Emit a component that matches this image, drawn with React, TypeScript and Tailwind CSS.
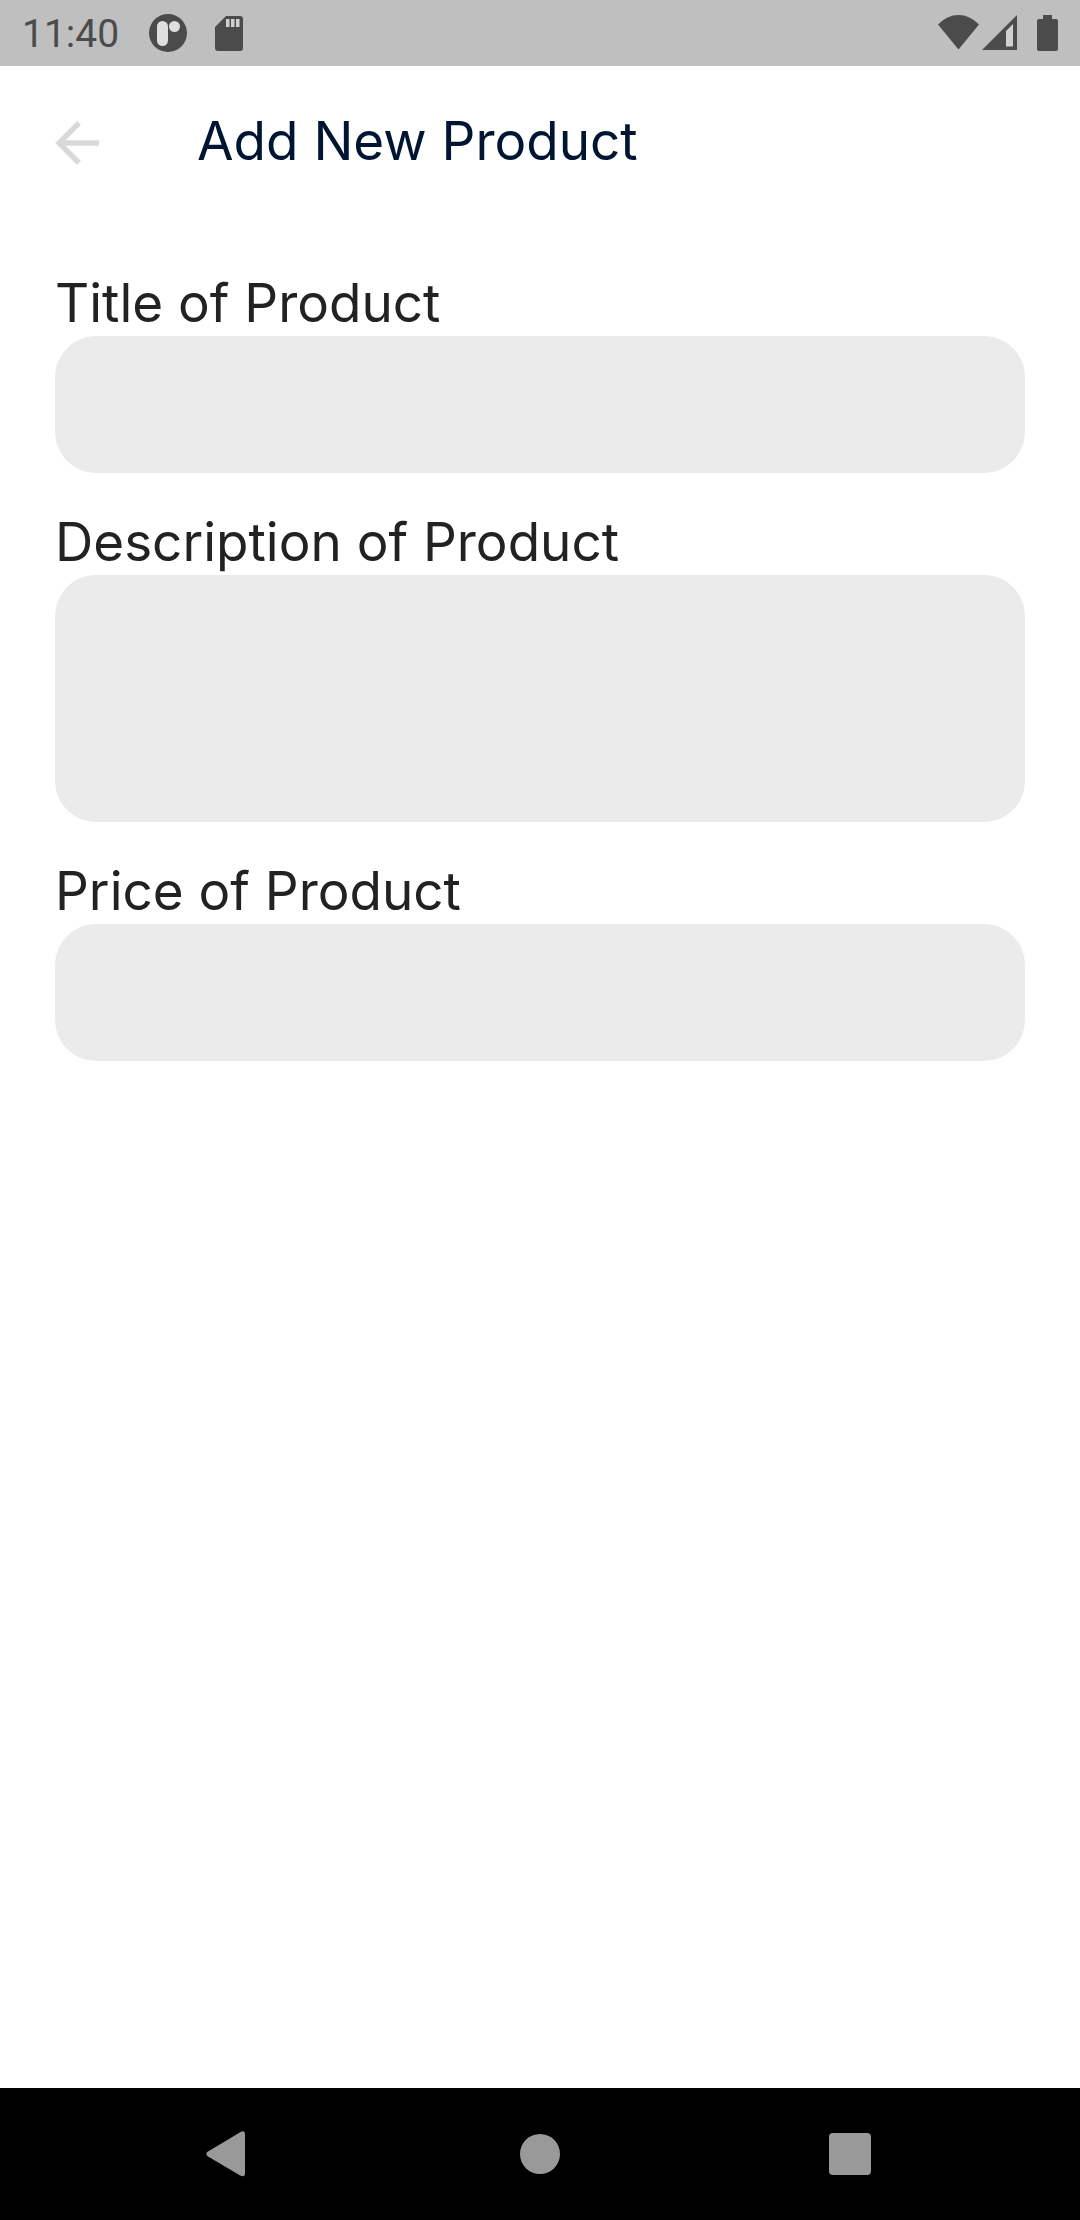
import React from "react";

function StatusBar() {
  return (
    <div className="flex h-[66px] shrink-0 items-center justify-between bg-[#bfbfbf] px-[22px] text-[#4b4b4b]">
      <div className="flex items-center">
        <time className="pt-0.5 font-['Roboto',sans-serif] text-[39px] leading-[46px]">11:40</time>
        <svg className="ml-[30px] h-[38px] w-[38px]" viewBox="0 0 38 38" aria-hidden="true">
          <circle cx="19" cy="19" r="19" fill="currentColor" />
          <rect x="8" y="7" width="11" height="25" rx="5.5" fill="#dedede" />
          <circle cx="25.5" cy="12.5" r="5.5" fill="#dedede" />
        </svg>
        <svg className="ml-7 h-[35px] w-7" viewBox="0 0 28 35" aria-hidden="true">
          <path d="M11 0H25a3 3 0 0 1 3 3V32a3 3 0 0 1-3 3H3a3 3 0 0 1-3-3V11z" fill="currentColor" />
          <path d="M11 3h3.5v8H11zM16 3h3.5v8H16zM21 3h3.5v8H21z" fill="#cfcfcf" />
        </svg>
      </div>
      <div className="flex items-center">
        <svg className="h-9 w-[41px]" viewBox="0 0 41 36" aria-hidden="true">
          <path d="M0 9.5Q9 0 20.5 0T41 9.5L20.5 34.5z" fill="currentColor" />
        </svg>
        <svg className="ml-[3px] h-9 w-[35px]" viewBox="0 0 35 36" aria-hidden="true">
          <path d="M35 0V35H0z" fill="currentColor" />
          <path d="M24 16L31 9V31.5H24z" fill="#d0d0d0" />
        </svg>
        <svg className="ml-5 h-9 w-[21px]" viewBox="0 0 21 36" aria-hidden="true">
          <path d="M6 0h9v4h4a2 2 0 0 1 2 2V34a2 2 0 0 1-2 2H2a2 2 0 0 1-2-2V6a2 2 0 0 1 2-2h4z" fill="currentColor" />
        </svg>
      </div>
    </div>
  );
}

function Header() {
  return (
    <header className="flex h-[154px] shrink-0 items-center px-[55px]">
      <button type="button" aria-label="Go back" className="text-[#d9d9d9]">
        <svg className="h-11 w-11" viewBox="0 0 44 44" aria-hidden="true">
          <path d="M44 22H5M24 2L4 22L24 42" fill="none" stroke="currentColor" strokeWidth="5.4" />
        </svg>
      </button>
      <h1 className="ml-[98px] pb-1 text-[53px] leading-[57px] text-[#001532]">Add New Product</h1>
    </header>
  );
}

const labelClass = "block pb-1";
const fieldClass = "block w-full resize-none rounded-[41px] bg-[#ebebeb] px-10 outline-none";

function NavBar() {
  return (
    <nav className="grid h-[132px] shrink-0 grid-cols-3 bg-black px-[75px] text-[#999999]">
      <button type="button" aria-label="Back" className="flex items-center justify-center">
        <svg className="h-[46px] w-[48px]" viewBox="0 0 48 46" aria-hidden="true">
          <path d="M34.2 1.3Q39 -1.5 39 4V42Q39 47 34.2 44.5L2 25.5Q-1.5 23 2 20.5z" fill="currentColor" />
        </svg>
      </button>
      <button type="button" aria-label="Home" className="flex items-center justify-center">
        <span className="size-10 rounded-full bg-[#999999]" />
      </button>
      <button type="button" aria-label="Recent apps" className="flex items-center justify-center">
        <span className="size-[42px] rounded-[4px] bg-[#999999]" />
      </button>
    </nav>
  );
}

export default function App() {
  return (
    <div className="flex min-h-screen flex-col bg-white font-['Inter',sans-serif]">
      <StatusBar />
      <Header />
      <main className="flex-1 px-[55px] pt-[55px]">
        <form className="flex flex-col gap-[41px] text-[53px] leading-[57px] text-[#222222]">
          <div>
            <label htmlFor="title" className={labelClass}>Title of Product</label>
            <input id="title" type="text" className={`${fieldClass} h-[137px]`} />
          </div>
          <div>
            <label htmlFor="description" className={labelClass}>Description of Product</label>
            <textarea id="description" className={`${fieldClass} h-[247px] py-9`} />
          </div>
          <div>
            <label htmlFor="price" className={labelClass}>Price of Product</label>
            <input id="price" type="text" inputMode="decimal" className={`${fieldClass} h-[137px]`} />
          </div>
        </form>
      </main>
      <NavBar />
    </div>
  );
}
